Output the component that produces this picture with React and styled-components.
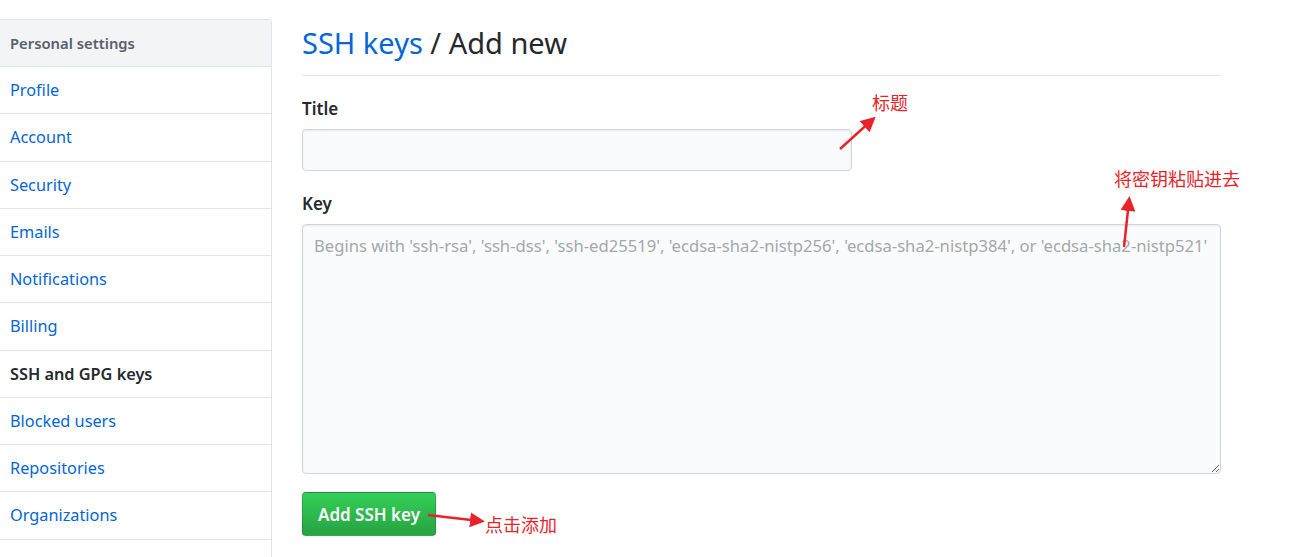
import React from "react";
import styled, { createGlobalStyle } from "styled-components";

const GlobalStyle = createGlobalStyle`
  html, body {
    margin: 0;
    padding: 0;
    background: #ffffff;
  }
  body {
    font-family: "Noto Sans", "Liberation Sans", sans-serif;
    color: #24292e;
    overflow: hidden;
  }
`;

const menuItems = [
  "Profile",
  "Account",
  "Security",
  "Emails",
  "Notifications",
  "Billing",
  "SSH and GPG keys",
  "Blocked users",
  "Repositories",
  "Organizations",
  "Saved replies",
];

export default function App() {
  return (
    <>
      <GlobalStyle />
      <Page>
        <Sidebar>
          <SidebarHeader>Personal settings</SidebarHeader>
          {menuItems.map((item) => (
            <MenuItem key={item} selected={item === "SSH and GPG keys"}>
              {item}
            </MenuItem>
          ))}
        </Sidebar>
        <Main>
          <Heading>
            <Crumb>SSH keys</Crumb> / Add new
          </Heading>
          <Field>
            <Label>Title</Label>
            <Input type="text" />
          </Field>
          <Field>
            <Label>Key</Label>
            <TextArea placeholder="Begins with 'ssh-rsa', 'ssh-dss', 'ssh-ed25519', 'ecdsa-sha2-nistp256', 'ecdsa-sha2-nistp384', or 'ecdsa-sha2-nistp521'" />
          </Field>
          <Button>Add SSH key</Button>
        </Main>

        <Arrows width="1291" height="557" viewBox="0 0 1291 557">
          <defs>
            <marker
              id="head"
              markerWidth="6"
              markerHeight="6"
              refX="4"
              refY="3"
              orient="auto"
              markerUnits="strokeWidth"
            >
              <path d="M0,0 L6,3 L0,6 z" fill="#e8242a" />
            </marker>
          </defs>
          <line x1="840" y1="149" x2="872" y2="120" stroke="#e8242a" strokeWidth="2.5" markerEnd="url(#head)" />
          <line x1="1124" y1="247" x2="1129" y2="201" stroke="#e8242a" strokeWidth="2.5" markerEnd="url(#head)" />
          <line x1="428" y1="515" x2="480" y2="521" stroke="#e8242a" strokeWidth="2.5" markerEnd="url(#head)" />
        </Arrows>
        <Note x={872} y={90}>标题</Note>
        <Note x={1114} y={166}>将密钥粘贴进去</Note>
        <Note x={485} y={512}>点击添加</Note>
      </Page>
    </>
  );
}

const Page = styled.div`
  position: relative;
  display: flex;
  align-items: flex-start;
  gap: 30px;
  width: 1291px;
  height: 557px;
  padding-top: 19px;
  box-sizing: border-box;
  overflow: hidden;
`;

const Sidebar = styled.nav`
  width: 272px;
  flex-shrink: 0;
  box-sizing: border-box;
  border: 1px solid #e1e4e8;
  border-left: none;
  border-top-right-radius: 4px;
  display: flex;
  flex-direction: column;
`;

const SidebarHeader = styled.div`
  height: 46px;
  line-height: 46px;
  padding-left: 10px;
  background: #f3f4f6;
  color: #586069;
  font-size: 14.8px;
  font-weight: 600;
  border-top-right-radius: 4px;
`;

const MenuItem = styled.a`
  display: block;
  height: 46.25px;
  line-height: 46px;
  padding-left: 10px;
  border-top: 1px solid #e1e4e8;
  font-size: 16.3px;
  color: ${(p) => (p.selected ? "#24292e" : "#0366d6")};
  font-weight: ${(p) => (p.selected ? 600 : 400)};
  text-decoration: none;
  white-space: nowrap;
`;

const Main = styled.main`
  width: 919px;
  display: flex;
  flex-direction: column;
  align-items: flex-start;
`;

const Heading = styled.h2`
  margin: 0;
  width: 100%;
  font-size: 29px;
  font-weight: 400;
  line-height: 48px;
  padding-bottom: 8px;
  border-bottom: 1px solid #e1e4e8;
  color: #24292e;
`;

const Crumb = styled.a`
  color: #0366d6;
  text-decoration: none;
`;

const Field = styled.div`
  width: 100%;
  margin-top: 21px;
  display: flex;
  flex-direction: column;
  align-items: flex-start;
`;

const Label = styled.label`
  font-size: 17px;
  font-weight: 600;
  line-height: 24px;
  margin-bottom: 8px;
`;

const Input = styled.input`
  width: 550px;
  height: 42px;
  box-sizing: border-box;
  background: #fafbfc;
  border: 1px solid #d1d5da;
  border-radius: 4px;
  box-shadow: inset 0 1px 2px rgba(27, 31, 35, 0.075);
  outline: none;
`;

const TextArea = styled.textarea`
  width: 919px;
  height: 250px;
  box-sizing: border-box;
  padding: 9px 11px;
  background: #fafbfc;
  border: 1px solid #d1d5da;
  border-radius: 4px;
  box-shadow: inset 0 1px 2px rgba(27, 31, 35, 0.075);
  font-family: "Noto Sans", "Liberation Sans", sans-serif;
  font-size: 16.65px;
  line-height: 24px;
  outline: none;
  resize: vertical;
  &::placeholder {
    color: #a3a8ad;
  }
`;

const Button = styled.button`
  margin-top: 18px;
  width: 134px;
  height: 44px;
  border: 1px solid rgba(27, 31, 35, 0.2);
  border-radius: 4px;
  background: linear-gradient(180deg, #34d058 0%, #28a745 90%);
  color: #ffffff;
  font-family: "Noto Sans", "Liberation Sans", sans-serif;
  font-size: 17px;
  font-weight: 600;
  cursor: pointer;
`;

const Arrows = styled.svg`
  position: absolute;
  left: 0;
  top: 0;
  pointer-events: none;
`;

const Note = styled.span`
  position: absolute;
  left: ${(p) => p.x}px;
  top: ${(p) => p.y}px;
  color: #e8242a;
  font-family: "Noto Sans CJK SC", "Noto Sans", sans-serif;
  font-size: 18px;
  line-height: 24px;
  white-space: nowrap;
`;
